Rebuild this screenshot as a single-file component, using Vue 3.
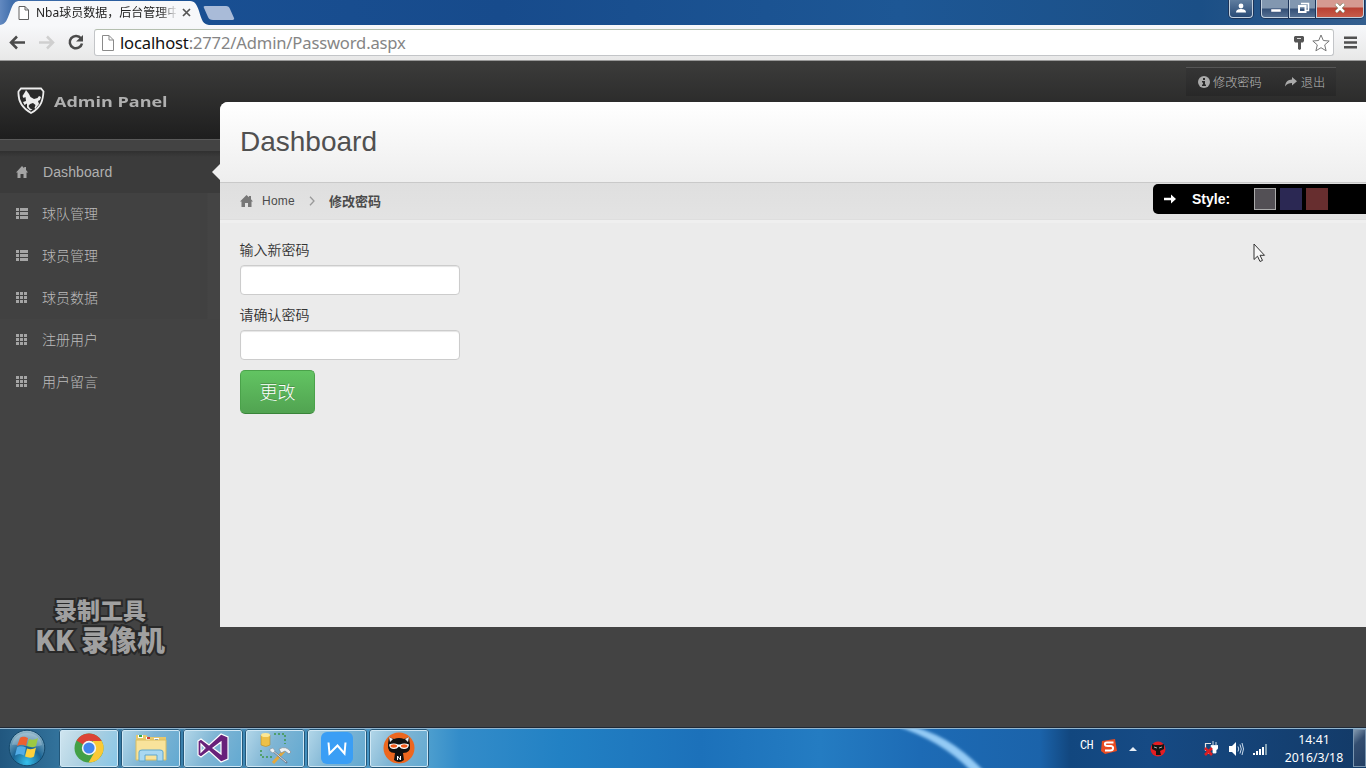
<script setup>
const menu = [
  { label: 'Dashboard', icon: 'home', active: true, latin: true },
  { label: '球队管理', icon: 'list' },
  { label: '球员管理', icon: 'list' },
  { label: '球员数据', icon: 'grid' },
  { label: '注册用户', icon: 'grid' },
  { label: '用户留言', icon: 'grid' }
]
const fields = ['输入新密码', '请确认密码']
const cells = [0, 4, 8]
</script>

<template>
  <div class="screen">
    <header class="titlebar">
      <div class="tab">
        <svg class="tab-shape" width="240" height="25" viewBox="0 0 240 25">
          <path d="M0 25 C6 24 7 20 10 12 C13 3 15 1 20 1 H190 C195 1 197 5 199 11 C202 21 203 24 209 25Z" fill="#f7f8fa" />
          <path d="M205 6 H226 Q229 6 230 9 L234 18 Q235 20 231 20 H213 Q209 20 208 17 L204 8 Q203 6 205 6Z" fill="#a9bbd8" />
        </svg>
        <svg class="tab-page" width="12" height="14" viewBox="0 0 12 14"><path d="M1 .5H7L10.5 4V13.5H1ZM7 .5V4H10.5" fill="#fff" stroke="#606060" /></svg>
        <span class="tab-title">Nba球员数据，后台管理中</span>
        <svg class="tab-close" width="9" height="9" viewBox="0 0 9 9"><path d="M1 1L8 8M8 1L1 8" stroke="#555" stroke-width="1.7" /></svg>
      </div>
      <div class="winbtns">
        <div class="wb user"><svg width="12" height="10" viewBox="0 0 12 10"><circle cx="6" cy="3" r="2.4" fill="#fff" /><path d="M1 9.5C1 6.5 4 6 6 6S11 6.500 11 9.500Z" fill="#fff" /></svg></div>
        <div class="wb min"><svg width="12" height="10" viewBox="0 0 12 10"><path d="M1 6H11V9H1Z" fill="#fff" stroke="#455b80" stroke-width=".5" /></svg></div>
        <div class="wb max"><svg width="13" height="12" viewBox="0 0 13 12"><path d="M4 1.500H11.500V8.500H9" fill="none" stroke="#fff" stroke-width="1.500" /><rect x="2" y="4" width="6.500" height="6" fill="none" stroke="#fff" stroke-width="2" /></svg></div>
        <div class="wb close"><svg width="12" height="10" viewBox="0 0 12 10"><path d="M2 1L10 9M10 1L2 9" stroke="#664" stroke-width="3.600" /><path d="M2 1L10 9M10 1L2 9" stroke="#fff" stroke-width="2.500" /></svg></div>
      </div>
    </header>

    <div class="toolbar">
      <svg class="nav" width="88" height="24" viewBox="0 0 88 24">
        <path d="M25 11.500H11M17 5.500L11 11.500L17 17.500" fill="none" stroke="#4b4b4b" stroke-width="2.500" />
        <path d="M39 11.500H53M47 5.500L53 11.500L47 17.500" fill="none" stroke="#cfcfcf" stroke-width="2.500" />
        <path d="M81 7.500A6.200 6.200 0 1 0 82 12.500" fill="none" stroke="#4b4b4b" stroke-width="2.500" /><path d="M83 4V10.500H76Z" fill="#4b4b4b" />
      </svg>
      <div class="address">
        <svg class="doc" width="12" height="16" viewBox="0 0 12 16"><path d="M.5 .5H7L11.500 5V15.500H.5ZM7 .5V5H11.500" fill="#fff" stroke="#8a8a8a" /></svg>
        <span class="url"><b>localhost</b>:2772/Admin/Password.aspx</span>
        <svg class="key" width="10" height="14" viewBox="0 0 10 14"><path d="M1 0H9L10 1V5L9 6.500H7V13L5.500 14L4 13V6.500H1L0 5V1Z" fill="#555" /><path d="M3 2.500H7" stroke="#ddd" /></svg>
        <svg class="star" width="18" height="18" viewBox="0 0 18 18"><path d="M9 1L11.300 6.500L17.200 7L12.700 10.900L14.100 16.800L9 13.700L3.900 16.800L5.300 10.900L.8 7L6.700 6.500Z" fill="#fff" stroke="#777" /></svg>
      </div>
      <svg class="burger" width="13" height="13" viewBox="0 0 13 13"><path d="M0 1.700H13M0 6.500H13M0 11.300H13" stroke="#505050" stroke-width="2.600" /></svg>
    </div>

    <div class="page">
      <aside class="sidebar">
        <div class="brand">
          <svg width="28" height="28" viewBox="0 0 28 28">
            <path d="M4 1.500H24L26.500 4.500C26 12 25 20 14 26C3 20 1 12 1.500 4.500Z" fill="#292929" stroke="#ededed" stroke-width="1.800" />
            <path d="M5.500 9L8 5L9 3L10.500 5L12 7L13.500 10L17 12L20.500 11L22 9L24 10L23 13L21 14L22 17L20 19.500L18.500 22L17.500 21L18.500 18L16 16L13 17L11.500 19L13 21.500L15.500 22.500L13 23.500L10 20.500L10 16.500L7.500 18L6 15L9 14L8.500 10L6.500 11Z" fill="#ededed" />
          </svg>
          <span>Admin Panel</span>
        </div>
        <nav>
          <a v-for="item in menu" :key="item.label" :class="{ active: item.active }">
            <svg width="13" height="13" viewBox="0 0 13 13">
              <path v-if="item.icon === 'home'" d="M6 0L8.200 2.200V1H10V4L12 6.500H10.500V12H7.500V8H4.500V12H1.500V6.500H0Z" fill="#a5a5a5" />
              <g v-else-if="item.icon === 'list'" fill="#a5a5a5"><g v-for="y in cells" :key="y"><rect x="0" :y="y" width="3" height="3" /><rect x="4" :y="y" width="8" height="3" /></g></g>
              <g v-else fill="#a5a5a5"><template v-for="y in cells" :key="y"><rect v-for="x in cells" :key="x" :x="x" :y="y" width="3" height="3" /></template></g>
            </svg>
            <span :class="{ latin: item.latin }">{{ item.label }}</span>
          </a>
        </nav>
        <div class="watermark"><span class="w1">录制工具</span><span class="w2">KK 录像机</span></div>
      </aside>

      <main>
        <div class="usernav">
          <div class="userbox">
            <svg width="12" height="12" viewBox="0 0 12 12"><circle cx="6" cy="6" r="6" fill="#aaa" /><path d="M5 2H7V4H5ZM4 5H7V8.500H8V10H4V8.500H5V6.500H4Z" fill="#2b2b2b" /></svg>
            <span>修改密码</span>
            <svg class="share" width="12" height="10" viewBox="0 0 12 10"><path d="M7 0L12 4.200L7 8.400V6C4 6 2 6.500 0 9.500C.5 5 3 2.600 7 2.500Z" fill="#aaa" /></svg>
            <span>退出</span>
          </div>
        </div>
        <section class="panel">
          <div class="panel-head"><h1>Dashboard</h1></div>
          <div class="crumbs">
            <svg width="13" height="12" viewBox="0 0 13 12"><path d="M6.500 0L9 2.300V1H11V4.200L13 6.500H11.500V12H8V8H5V12H1.500V6.500H0Z" fill="#777" /></svg>
            <span class="home">Home</span>
            <svg class="chev" width="6" height="10" viewBox="0 0 6 10"><path d="M1 .7L5 5L1 9.300" fill="none" stroke="#999" stroke-width="1.300" /></svg>
            <strong>修改密码</strong>
            <div class="style-picker">
              <svg width="12" height="10" viewBox="0 0 12 10"><path d="M0 5H8" stroke="#fff" stroke-width="2.500" /><path d="M7 .5L12 5L7 9.500Z" fill="#fff" /></svg>
              <b>Style:</b><i class="sw grey"></i><i class="sw blue"></i><i class="sw red"></i>
            </div>
          </div>
          <form @submit.prevent>
            <div v-for="f in fields" :key="f" class="field"><label>{{ f }}</label><input type="text"></div>
            <button>更改</button>
          </form>
          <svg class="cursor" width="13" height="20" viewBox="0 0 13 20"><path d="M1 1V16.500L4.500 13.200L7 18.500L9.500 17.400L7 12.300H11.500Z" fill="#f7f7f7" stroke="#333" /></svg>
          <svg class="notch" width="8" height="16" viewBox="0 0 8 16"><path d="M8 0L0 8L8 16Z" fill="#efefef" /></svg>
        </section>
      </main>
    </div>

    <footer class="taskbar">
      <svg class="streak" width="110" height="39" viewBox="0 0 110 39">
        <defs><filter id="soft"><feGaussianBlur stdDeviation="1.600" /></filter></defs>
        <path d="M-2 -5C35 1 60 18 85 44L74 44C56 25 32 8 -2 -3Z" fill="#94cbf5" stroke="#8cc5f3" stroke-width="1.500" filter="url(#soft)" />
      </svg>
      <div class="start">
        <svg width="38" height="38" viewBox="0 0 38 38">
          <defs>
            <radialGradient id="orb" cx=".5" cy=".9" r=".9"><stop offset="0" stop-color="#35c2ee" /><stop offset=".45" stop-color="#1b6595" /><stop offset="1" stop-color="#9bbdcd" /></radialGradient>
          </defs>
          <circle cx="19" cy="19" r="17.800" fill="url(#orb)" stroke="#13486b" />
          <path d="M4 16C6 0 32 0 34 16C25 20 12 15 4 16Z" fill="#fff" opacity=".22" />
          <path d="M12 9C15 7 17 8 20 9L18 17C15 15 12 16 9 17Z" fill="#ed6030" />
          <path d="M21 10C24 11 27 11 30 9L28 17C25 19 22 18 19 17Z" fill="#9cc943" />
          <path d="M9 18.500C12 16.500 15 17.500 18 18.500L16 26.500C13 24.500 10 24.500 7 26.500Z" fill="#52ace6" />
          <path d="M19 19.500C22 20.500 25 20.500 28 18.500L26 27.500C23 29.500 20 28.500 17 27.500Z" fill="#fdd13c" />
        </svg>
      </div>
      <div class="task chrome">
        <svg width="32" height="32" viewBox="0 0 32 32"><circle cx="16" cy="16" r="14.500" fill="#43a047" /><path d="M16 16L3.500 8.500A14.500 14.500 0 0 1 28.600 9H16Z" fill="#dc4336" /><path d="M16 16L20 9H28.700A14.500 14.500 0 0 1 15.500 30.500L22 19.500Z" fill="#fbc935" /><circle cx="16" cy="16" r="7.200" fill="#f5f5f5" /><circle cx="16" cy="16" r="5.600" fill="#4386ee" /></svg>
      </div>
      <div class="task">
        <svg width="34" height="32" viewBox="0 0 34 32"><path d="M2 3H12L14 5H32V28H2Z" fill="#e8c96b" /><path d="M4 3H9V6H4ZM12 5H16V8H12ZM20 6H25V9H20Z" fill="#fff" /><path d="M5 3H8V5H5Z" fill="#37a84d" /><path d="M13 5H16V7H13Z" fill="#d64132" /><path d="M21 7H24V9H21Z" fill="#3b86dc" /><path d="M2 8H32V28H2Z" fill="#f8e39b" stroke="#d9bd62" /><path d="M5 29V20Q5 18 8 18H26Q29 18 29 20V29H23V23H11V29Z" fill="#a9d8f1" stroke="#5ea7cd" /></svg>
      </div>
      <div class="task">
        <svg width="32" height="30" viewBox="0 0 32 30"><path d="M1 8L4 6L12 12L24 1L31 4V26L24 29L12 18L4 24L1 22ZM4 11V19L8 15ZM16 15L24 21V9Z" fill="#68217a" fill-rule="evenodd" stroke="#fff" stroke-width="1.200" /></svg>
      </div>
      <div class="task tools">
        <svg width="34" height="34" viewBox="0 0 34 34"><path d="M3 4V14Q8 17 12 14V4Z" fill="#edc047" stroke="#a88124" stroke-width=".5" /><ellipse cx="7.500" cy="4" rx="4.500" ry="2" fill="#fbe795" /><path d="M16 3H27V13M3 19V26H14" fill="none" stroke="#3f974a" stroke-width="1.500" stroke-dasharray="2 2" /><path d="M15 32L26 20" stroke="#e5a83a" stroke-width="3" /><path d="M14 19L29 32" stroke="#707f91" stroke-width="2.200" /><path d="M14 19L28 31" stroke="#e4eaee" stroke-width=".9" /><path d="M21 18Q28 14 33 21L31 23L27 20L23 22Z" fill="#eef2f4" stroke="#7b8995" stroke-width=".7" /><path d="M12 18L15 17L17 20L15 22L12 20Z" fill="#eef2f4" stroke="#7b8995" stroke-width=".5" /></svg>
      </div>
      <div class="task">
        <svg width="32" height="32" viewBox="0 0 32 32"><rect width="32" height="32" rx="6" fill="#3a9ef5" /><path d="M7.500 10.500L8.500 21.500L16.500 13.500L23.500 21.500L24.500 10.500" fill="none" stroke="#fff" stroke-width="2" /></svg>
      </div>
      <div class="task">
        <svg width="32" height="32" viewBox="0 0 32 32"><circle cx="16" cy="16" r="15.500" fill="#ed671f" /><path d="M5 12L6 5L11 7Q16 5 21 7L26 5L27 13Q28 21 20 21H12Q4 21 5 12Z" fill="#111" /><path d="M6 5L10 7L7 10ZM26 5L22 7L25 10Z" fill="#eee" /><path d="M6 12.500Q11 10.500 15 12.500H17Q21 10.500 26 12.500Q25.500 17 21 17Q18 17 16 14.500Q14 17 11 17Q6.500 17 6 12.500Z" fill="#fff" /><ellipse cx="10.800" cy="14" rx="3.300" ry="1.700" fill="#ef5a1c" /><ellipse cx="21.200" cy="14" rx="3.300" ry="1.700" fill="#ef5a1c" /><path d="M12 21H20L21 28Q16 32 11 28Z" fill="#111" /><path d="M14.500 28V24L17.500 28V24" fill="none" stroke="#fff" /></svg>
      </div>
      <div class="tray">
        <span class="ch">CH</span>
        <svg class="sogou" width="16" height="16" viewBox="0 0 16 16"><path d="M1 2L14 0L16 12L4 15L0 12Z" fill="#e94b20" /><path d="M12.500 3.500H6Q3.500 3.500 4 5.500Q4 7 7 7H10Q12.500 7.500 12 9.500Q12 11.500 9 11.500H4" fill="none" stroke="#fff" stroke-width="2" /></svg>
        <svg class="up" width="8" height="4" viewBox="0 0 8 4"><path d="M0 4L4 0L8 4Z" fill="#e7eef6" /></svg>
        <svg class="kk" width="16" height="16" viewBox="0 0 16 16"><circle cx="8" cy="8" r="7.500" fill="#e51d22" /><path d="M2 3L5 4H11L14 3V8L10 10L11 14H6L6 10L2 8Z" fill="#151515" /><path d="M4 6L7 7M12 6L9 7" stroke="#aaa" /></svg>
        <svg class="plug" width="14" height="15" viewBox="0 0 14 15"><path d="M1.500 10V2.500H7M2 12.500H8" fill="none" stroke="#e5e5e5" stroke-width="1.200" /><path d="M9 0V4M12 1V4M7 4.500H14V7L12 9.500V12H9V9.500L7.500 7Z" fill="#fff" stroke="#fff" stroke-width=".8" /><path d="M1 7L8 14M8 7L1 14" stroke="#db1d22" stroke-width="2.600" /></svg>
        <svg class="sound" width="15" height="14" viewBox="0 0 15 14"><path d="M0 4H3L7 0V14L3 10H0Z" fill="#fff" /><path d="M9 4.500Q10.500 7 9 9.500M11 2.500Q13.500 7 11 11.500M13 1Q16 7 13 13" fill="none" stroke="#cbdced" /></svg>
        <svg class="signal" width="14" height="11" viewBox="0 0 14 11"><path d="M0 9H2V11H0ZM3 7H5V11H3ZM6 5H8V11H6ZM9 3H11V11H9Z" fill="#fff" /><path d="M12 0H14V11H12Z" fill="#84a2b6" /></svg>
        <div class="clock"><span>14:41</span><span>2016/3/18</span></div>
        <div class="peek"></div>
      </div>
    </footer>
  </div>
</template>

<style>
body { margin: 0; overflow: hidden; }
</style>

<style scoped>
.screen { width: 1366px; height: 768px; display: flex; flex-direction: column; overflow: hidden; font-family: "Liberation Sans", "Noto Sans CJK SC", sans-serif; }
svg { display: block; flex: none; }
span, strong, b, label { white-space: nowrap; }
.titlebar { height: 25px; display: flex; justify-content: space-between; background: linear-gradient(90deg, #6289c0 0, #416fac 12px, #194f92 200px, #174b8c 500px, #1d5795 900px, #1b4f86 1200px, #335e8e 1366px); }
.tab { position: relative; width: 240px; display: flex; align-items: center; }
.tab-shape { position: absolute; left: 0; top: 0; }
.tab-page { position: relative; margin-left: 18px; }
.tab-title { position: relative; margin-left: 6px; width: 140px; overflow: hidden; font: 12px/25px "Noto Sans", "Noto Sans CJK SC", sans-serif; color: #222; -webkit-mask-image: linear-gradient(90deg, #000 124px, transparent 142px); mask-image: linear-gradient(90deg, #000 124px, transparent 142px); }
.tab-close { position: relative; margin-left: 6px; }
.winbtns { display: flex; height: 18px; padding-right: 2px; }
.wb { box-sizing: border-box; height: 18px; display: flex; align-items: center; justify-content: center; border: 1px solid #c3d1df; border-top: 0; background: linear-gradient(#8297b0 0 8px, #334f76 9px, #546f92); box-shadow: 0 0 0 1px #1c3459; }
.wb svg { margin-top: -2px; }
.user { width: 24px; border-radius: 0 0 4px 4px; margin-right: 8px; background: linear-gradient(#5f7d9f, #294b76); }
.min { width: 28px; border-radius: 0 0 0 4px; border-right: 0; }
.max { width: 27px; border-right: 0; }
.close { width: 48px; border-radius: 0 0 4px 0; background: linear-gradient(#d59a91 0 7px, #b94133 8px, #c65c4a); }
.toolbar { height: 36px; box-sizing: border-box; display: flex; align-items: center; background: linear-gradient(#f7f8fa, #e8e8e8); border-bottom: 1px solid #999; }
.nav { margin-right: 6px; }
.address { box-sizing: border-box; width: 1240px; height: 27px; display: flex; align-items: center; background: #fff; border: 1px solid #c3c5c8; border-top-color: #b4bfaf; border-radius: 3px; }
.doc { margin-left: 7px; }
.url { flex: 1; margin-left: 6px; font: 16.600px/24px "Noto Sans", sans-serif; letter-spacing: -.16px; color: #858585; }
.url b { font-weight: 400; color: #111; }
.key { margin-left: 19px; }
.star { margin: 0 3px 0 8px; }
.burger { margin-left: 10px; }
.page { height: 667px; display: flex; background: linear-gradient(#3c3c3b, #1e1e1e 78px, #5a5a5a 78px 79px, #434343 79px); }
.sidebar { width: 220px; display: flex; flex-direction: column; flex: none; }
.brand { height: 78px; box-sizing: border-box; display: flex; align-items: center; padding: 2px 0 0 17px; color: #b0b0b0; }
.brand span { margin-left: 9px; font: 700 15px/24px "Open Sans", sans-serif; transform: scaleX(1.2); transform-origin: 0 50%; }
nav { margin-top: 12px; margin-bottom: 1px; }
nav a { height: 42px; display: flex; align-items: center; padding-left: 16px; color: #bcbcbc; }
nav a.active { background: linear-gradient(#303030, #3b3b3b 6px); }
nav a:nth-child(-n+4):not(.active) { background: linear-gradient(90deg, #414141 207px, #444 208px); }
nav a span { margin-left: 13px; font: 300 14px/20px "Liberation Sans", "Noto Sans CJK SC", sans-serif; }
nav a span.latin { margin-left: 14px; letter-spacing: .1px; color: #b0b0b0; }
.watermark { display: flex; flex-direction: column; align-items: center; margin: 191px 20px 0 0; color: #a0a0a0; font-family: "Noto Sans CJK SC", sans-serif; font-weight: 900; -webkit-text-stroke: 4px #292929; paint-order: stroke fill; }
.w1 { font-size: 23px; line-height: 29px; }
.w2 { font-size: 28px; line-height: 30px; }
main { width: 1146px; flex: none; }
.usernav { height: 41px; box-sizing: border-box; padding: 6px 30px 0 0; display: flex; justify-content: flex-end; }
.userbox { box-sizing: border-box; width: 150px; height: 29px; display: flex; align-items: center; padding-left: 12px; background: linear-gradient(#353535, #282828); border-top: 1px solid #555; color: #b8b8b8; font: 300 12.200px/18px "Noto Sans CJK SC", sans-serif; }
.userbox span { margin-left: 3px; }
.userbox .share { margin-left: 23px; }
.userbox span:last-child { margin-left: 4px; }
.panel { position: relative; height: 525px; background: #ebebeb; border-radius: 8px 0 0 0; }
.panel-head { height: 80px; box-sizing: border-box; border-radius: 8px 0 0 0; background: linear-gradient(#fff, #eee); padding: 24px 0 0 20px; }
h1 { margin: 0; font-weight: 400; font-size: 28px; line-height: 32px; color: #505050; }
.crumbs { height: 38px; box-sizing: border-box; border-top: 1px solid #c9c9c9; border-bottom: 1px solid #dedede; box-shadow: 0 3px 0 #efefef; background: linear-gradient(#dfdfdf, #e3e3e3); display: flex; align-items: center; padding-left: 20px; color: #4b4b4b; font-size: 12px; }
.home { margin-left: 9px; font-size: 12px; letter-spacing: .25px; }
.chev { margin-left: 14px; }
.crumbs strong { margin-left: 14px; font: 700 13px/18px "Noto Sans CJK SC", sans-serif; }
.style-picker { width: 213px; height: 30px; box-sizing: border-box; margin: -5px 0 0 auto; display: flex; align-items: center; padding-left: 11px; background: #000; border-radius: 5px 0 0 5px; color: #fff; }
.style-picker b { font-size: 14px; margin-left: 16px; width: 62px; }
.sw { box-sizing: border-box; width: 22px; height: 22px; margin-right: 4px; flex: none; }
.grey { background: #535055; border: 1px solid #aaa; }
.blue { background: #2b2853; }
.red { background: #672e2f; }
form { padding: 19px 20px 0; }
.field { height: 65px; }
label { display: block; height: 26px; margin-left: -.5px; font: 350 14px/20px "Noto Sans CJK SC", sans-serif; color: #333; }
input { display: block; box-sizing: border-box; width: 220px; height: 30px; background: #fff; border: 1px solid #ccc; border-radius: 4px; box-shadow: inset 0 1px 1px #e5e5e5; }
button { display: block; width: 75px; height: 44px; margin-top: 1px; padding: 0 0 2px; border: 1px solid #4aa24a; border-bottom-color: #398439; border-radius: 5px; background: linear-gradient(#62c462, #51a351); color: #fff; font: 300 18px/24px "Noto Sans CJK SC", sans-serif; text-shadow: 0 -1px 0 #4a904a; }
.cursor { position: absolute; left: 1033px; top: 141px; }
.notch { position: absolute; left: -8px; top: 62px; }
.taskbar { position: relative; height: 40px; box-sizing: border-box; display: flex; border-top: 1px solid #91b5cf; box-shadow: 0 -1px #202936; background: linear-gradient(90deg, #21577f 0, #32729b 58px, #4b9dce 430px, #338cc9 460px, #2281c4 560px, #1c71ba 700px, #247cc2 820px, #1d6bb5 920px, #1b63aa 1040px, #12477f 1070px, #164a84 1150px, #133a67 1366px); }
.streak { position: absolute; left: 900px; top: 0; }
.start { width: 59px; padding: 0 0 0 8px; box-sizing: border-box; display: flex; }
.task { box-sizing: border-box; width: 60px; height: 39px; margin-right: 2px; padding-bottom: 2px; display: flex; align-items: center; justify-content: center; border: 1px solid #d0e8f5; border-radius: 3px; outline: 1px solid #235779; outline-offset: -1px; background: linear-gradient(115deg, #b3d7e9, #7fb5d4 45%, #62a9d1); box-shadow: inset 0 0 0 1px #d0e8f5; }
.chrome { background: linear-gradient(115deg, #d0e5ef, #aacfe1 50%, #87c6e7); }
.tray { position: relative; margin-left: auto; width: 286px; height: 39px; display: flex; align-items: center; color: #fff; }
.ch { font: 12px/14px "Liberation Mono", monospace; letter-spacing: -.7px; width: 15px; margin-top: -5px; }
.sogou { margin: -4px 0 0 6px; }
.up { margin-left: 12px; margin-top: 1px; }
.kk { margin-left: 13px; }
.plug { margin-left: 38px; }
.sound { margin-left: 11px; }
.signal { margin-left: 9px; margin-top: 1px; }
.clock { width: 62px; margin-left: 16px; display: flex; flex-direction: column; align-items: center; font: 12.300px/18px "Noto Sans", sans-serif; }
.peek { box-sizing: border-box; position: absolute; right: 0; top: 0; width: 13px; height: 38px; border: 1px solid #7995b0; background: linear-gradient(135deg, #8298ae, #344e70 35%, #223e64); }
</style>
